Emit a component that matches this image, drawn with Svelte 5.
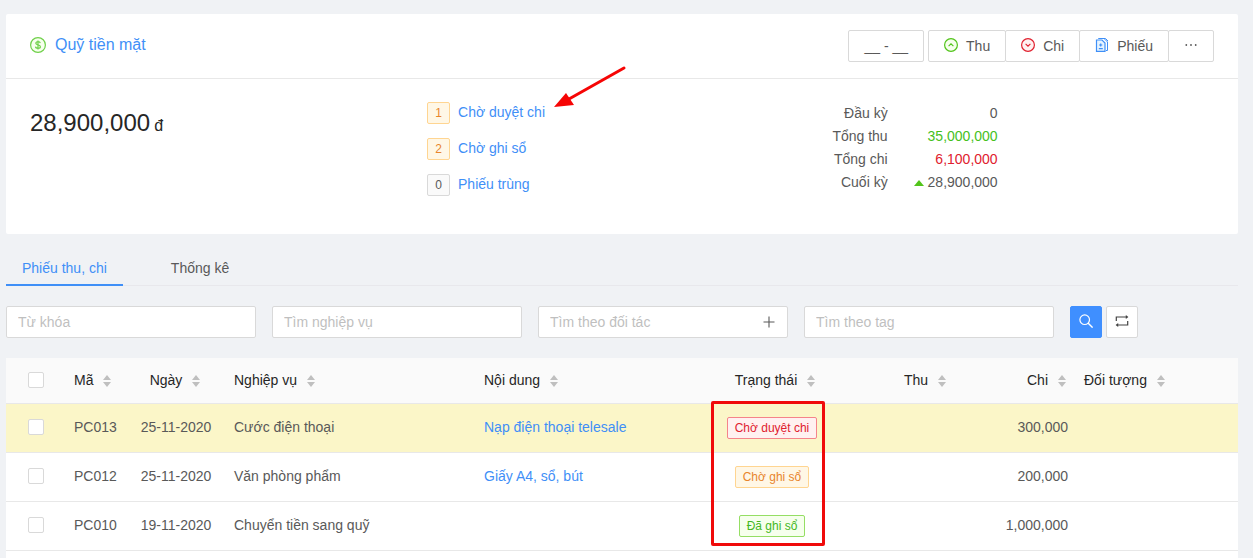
<script lang="ts">
    interface Column {
        title: string;
        align: "left" | "center" | "right";
    }

    interface Voucher {
        code: string;
        date: string;
        type: string;
        content: string;
        status: string;
        tone: string;
        income: string;
        expense: string;
        partner: string;
        marked?: boolean;
    }

    const pending = [
        { count: 1, label: "Chờ duyệt chi", tone: "orange" },
        { count: 2, label: "Chờ ghi sổ", tone: "orange" },
        { count: 0, label: "Phiếu trùng", tone: "plain" },
    ];

    const totals = [
        { label: "Đầu kỳ", value: "0", tone: "" },
        { label: "Tổng thu", value: "35,000,000", tone: "income" },
        { label: "Tổng chi", value: "6,100,000", tone: "expense" },
        { label: "Cuối kỳ", value: "28,900,000", tone: "", up: true },
    ];

    const columns: Column[] = [
        { title: "Mã", align: "left" },
        { title: "Ngày", align: "center" },
        { title: "Nghiệp vụ", align: "left" },
        { title: "Nội dung", align: "left" },
        { title: "Trạng thái", align: "center" },
        { title: "Thu", align: "right" },
        { title: "Chi", align: "right" },
        { title: "Đối tượng", align: "left" },
    ];

    const vouchers: Voucher[] = [
        { code: "PC013", date: "25-11-2020", type: "Cước điện thoại", content: "Nạp điện thoại telesale", status: "Chờ duyệt chi", tone: "red", income: "", expense: "300,000", partner: "", marked: true },
        { code: "PC012", date: "25-11-2020", type: "Văn phòng phẩm", content: "Giấy A4, sổ, bút", status: "Chờ ghi sổ", tone: "orange", income: "", expense: "200,000", partner: "" },
        { code: "PC010", date: "19-11-2020", type: "Chuyển tiền sang quỹ", content: "", status: "Đã ghi sổ", tone: "green", income: "", expense: "1,000,000", partner: "" },
    ];

    let activeTab = $state(0);
    let selected: string[] = $state([]);
    let allSelected = $derived(selected.length === vouchers.length);

    function toggleAll() {
        selected = allSelected ? [] : vouchers.map((v) => v.code);
    }
</script>

<main>
    <section class="card">
        <header class="card-head">
            <a class="title" href="#fund">
                <svg class="title-icon" viewBox="0 0 16 16" aria-hidden="true">
                    <circle cx="8" cy="8" r="7.4" fill="#f6ffed" stroke="#6fd04a" stroke-width="1.2" />
                    <path d="M10.3 6.2c-.2-1-1-1.5-2.3-1.5s-2.2.6-2.2 1.6c0 2.3 4.6 1 4.6 3.4 0 1-1 1.6-2.4 1.6s-2.4-.6-2.5-1.7M8 3.4v9.2" fill="none" stroke="#6fd04a" stroke-width="1.2" />
                </svg>
                <span>Quỹ tiền mặt</span>
            </a>
            <div class="actions">
                <button class="btn range">__ - __</button>
                <div class="btn-group">
                    <button class="btn">
                        <svg viewBox="0 0 14 14" aria-hidden="true">
                            <circle cx="7" cy="7" r="6.4" fill="#f6ffed" stroke="#52c41a" stroke-width="1.2" />
                            <path d="M4.6 8.2 7 5.8l2.4 2.4" fill="none" stroke="#52c41a" stroke-width="1.1" />
                        </svg>
                        Thu
                    </button>
                    <button class="btn">
                        <svg viewBox="0 0 14 14" aria-hidden="true">
                            <circle cx="7" cy="7" r="6.4" fill="#fff1f0" stroke="#e0202e" stroke-width="1.2" />
                            <path d="M4.6 5.8 7 8.2l2.4-2.4" fill="none" stroke="#e0202e" stroke-width="1.1" />
                        </svg>
                        Chi
                    </button>
                    <button class="btn">
                        <svg viewBox="0 0 14 14" aria-hidden="true">
                            <path d="M3.5 1V.5H9L12.5 4v8.5H11M5 .5h5.5L13 3" fill="none" stroke="#3f8ff7" />
                            <path d="M1.5 2h5.5L10 5v8.4H1.5z" fill="#e6f4ff" stroke="#3f8ff7" stroke-width="1.2" />
                            <path d="M5.7 5.4v3.2M4.1 7h3.2M3.8 10.7h4" fill="none" stroke="#3f8ff7" stroke-width="1.2" />
                        </svg>
                        Phiếu
                    </button>
                    <button class="btn more" aria-label="Thêm">
                        <svg viewBox="0 0 14 14" aria-hidden="true">
                            <g fill="#595959"><circle cx="2.3" cy="7" r=".9" /><circle cx="7" cy="7" r=".9" /><circle cx="11.7" cy="7" r=".9" /></g>
                        </svg>
                    </button>
                </div>
            </div>
        </header>

        <div class="summary">
            <div class="balance"><span>28,900,000</span><small>đ</small></div>
            <ul class="pending">
                {#each pending as item, i}
                    <li>
                        <span class="tag {item.tone}">{item.count}</span>
                        <a href="#pending-{i}">{item.label}</a>
                        {#if i === 0}
                            <svg class="arrow" viewBox="0 0 74 44" aria-hidden="true">
                                <path d="M70 3 15 34" stroke="#f60505" stroke-width="3" stroke-linecap="round" />
                                <path d="M0 42 12 28l8 12z" fill="#f60505" />
                            </svg>
                        {/if}
                    </li>
                {/each}
            </ul>
            <dl class="totals">
                {#each totals as row}
                    <dt>{row.label}</dt>
                    <dd class={row.tone}>
                        {#if row.up}<span class="caret-up"></span>{/if}{row.value}
                    </dd>
                {/each}
            </dl>
        </div>
    </section>

    <div class="tabs" role="tablist">
        {#each ["Phiếu thu, chi", "Thống kê"] as tab, i}
            <button role="tab" class="tab" class:active={activeTab === i} aria-selected={activeTab === i} onclick={() => (activeTab = i)}>{tab}</button>
        {/each}
    </div>

    <form class="filters" onsubmit={(e) => e.preventDefault()}>
        <input type="text" placeholder="Từ khóa" aria-label="Từ khóa" />
        <input type="text" placeholder="Tìm nghiệp vụ" aria-label="Tìm nghiệp vụ" />
        <div class="with-add">
            <input type="text" placeholder="Tìm theo đối tác" aria-label="Tìm theo đối tác" />
            <button type="button" class="add" aria-label="Thêm đối tác">
                <svg viewBox="0 0 14 14" aria-hidden="true"><path d="M7 1.5v11M1.5 7h11" stroke="#595959" stroke-width="1.1" /></svg>
            </button>
        </div>
        <input type="text" placeholder="Tìm theo tag" aria-label="Tìm theo tag" />
        <div class="filter-buttons">
            <button type="submit" class="square primary" aria-label="Tìm kiếm">
                <svg viewBox="0 0 14 14" aria-hidden="true">
                    <circle cx="5.7" cy="5.7" r="4.8" fill="none" stroke="#fff" stroke-width="1.2" />
                    <path d="m9 9 4.6 4.6" stroke="#fff" stroke-width="1.4" />
                </svg>
            </button>
            <button type="reset" class="square" aria-label="Đặt lại">
                <svg viewBox="0 0 14 14" aria-hidden="true">
                    <path d="M1.3 7V3h10M12.7 7v4h-10" fill="none" stroke="#434343" stroke-width="1.2" />
                    <path d="m10.8 1 2.6 2-2.6 2zM3.2 9 .6 11l2.6 2z" fill="#434343" />
                </svg>
            </button>
        </div>
    </form>

    <table>
        <colgroup>
            <col class="w-check" />
            <col class="w-code" />
            <col class="w-date" />
            <col class="w-type" />
            <col class="w-content" />
            <col class="w-money" />
            <col class="w-money" />
            <col class="w-money" />
            <col />
        </colgroup>
        <thead>
            <tr>
                <th class="center"><input type="checkbox" aria-label="Chọn tất cả" checked={allSelected} onchange={toggleAll} /></th>
                {#each columns as column}
                    <th class={column.align}>
                        <button class="sort">
                            {column.title}
                            <svg viewBox="0 0 8 12" aria-hidden="true"><path d="M4 0l4 5H0zM4 12l4-5H0z" fill="#bfbfbf" /></svg>
                        </button>
                    </th>
                {/each}
            </tr>
        </thead>
        <tbody>
            {#each vouchers as v, i}
                <tr class:marked={v.marked}>
                    <td class="center"><input type="checkbox" aria-label={v.code} value={v.code} bind:group={selected} /></td>
                    <td>{v.code}</td>
                    <td class="center">{v.date}</td>
                    <td>{v.type}</td>
                    <td>{#if v.content}<a href="#{v.code}">{v.content}</a>{/if}</td>
                    <td class="center status">
                        <span class="tag {v.tone}">{v.status}</span>
                        {#if i === 0}<span class="frame"></span>{/if}
                    </td>
                    <td class="right">{v.income}</td>
                    <td class="right">{v.expense}</td>
                    <td>{v.partner}</td>
                </tr>
            {/each}
            <tr class="next"><td colspan="9"></td></tr>
        </tbody>
    </table>
</main>

<style>
    :global(body) {
        background: #f0f2f5;
    }

    main {
        padding: 14px 15px 0 6px;
        color: #595959;
        font: 14px/22px "Liberation Sans", Arial, sans-serif;
    }

    main :global(*) {
        box-sizing: border-box;
    }

    svg {
        display: block;
        flex: none;
        width: 14px;
        height: 14px;
    }

    a {
        color: #3f8ff7;
        text-decoration: none;
    }

    button,
    input {
        margin: 0;
        color: inherit;
        font: inherit;
    }

    button {
        cursor: pointer;
    }

    .card {
        background: #fff;
        border-radius: 2px;
    }

    .card-head {
        display: flex;
        align-items: center;
        justify-content: space-between;
        height: 65px;
        padding: 0 24px;
        border-bottom: 1px solid #e8e8e8;
    }

    .title {
        display: flex;
        align-items: center;
        gap: 9px;
        padding-bottom: 2px;
        font-size: 16px;
    }

    .title-icon {
        width: 16px;
        height: 16px;
    }

    .actions {
        display: flex;
        gap: 4px;
    }

    .btn-group {
        display: flex;
    }

    .btn {
        display: flex;
        align-items: center;
        gap: 8px;
        height: 32px;
        padding: 0 15px;
        border: 1px solid #d9d9d9;
        border-radius: 2px;
        background: #fff;
    }

    .btn svg {
        margin-bottom: 2px;
    }

    .btn-group .btn + .btn {
        margin-left: -1px;
    }

    .summary {
        display: grid;
        grid-template-columns: repeat(3, 1fr);
        gap: 8px;
        padding: 22px 24px 37px;
    }

    .balance {
        display: flex;
        align-items: baseline;
        gap: 4px;
        padding-top: 4px;
        color: #262626;
        font-size: 24px;
        line-height: 36px;
    }

    .balance small {
        font-size: 16px;
        line-height: 22px;
    }

    .pending {
        display: grid;
        align-content: start;
        gap: 12px;
        margin: 0;
        padding: 0;
        list-style: none;
    }

    .pending li {
        display: flex;
        align-items: center;
        gap: 8px;
        position: relative;
        height: 24px;
    }

    .pending a {
        padding-bottom: 2px;
    }

    .arrow {
        position: absolute;
        left: 127px;
        top: -36px;
        width: 74px;
        height: 44px;
    }

    .tag {
        display: inline-block;
        height: 22px;
        padding: 0 7px;
        border: 1px solid #d9d9d9;
        border-radius: 2px;
        background: #fafafa;
        font-size: 12px;
        line-height: 20px;
    }

    .tag.orange {
        border-color: #ffd591;
        background: #fff7e6;
        color: #e8852c;
    }

    .tag.red {
        border-color: #f5848a;
        background: #fff1f0;
        color: #e0202e;
    }

    .tag.green {
        border-color: #95de64;
        background: #f6ffed;
        color: #45b81f;
    }

    .totals {
        display: grid;
        grid-template-columns: 63px 110px;
        align-content: start;
        margin: 0;
        padding-top: 1px;
        line-height: 23px;
        text-align: right;
    }

    .totals dd {
        margin: 0;
    }

    .income {
        color: #45c11c;
    }

    .expense {
        color: #e0202e;
    }

    .caret-up {
        display: inline-block;
        margin-right: 4px;
        border: 5px solid transparent;
        border-top: 0;
        border-bottom: 6px solid #52c41a;
        vertical-align: 1px;
    }

    .tabs {
        display: flex;
        gap: 32px;
        margin-top: 12px;
        box-shadow: inset 0 -1px #e8e8ec;
    }

    .tab {
        padding: 11px 16px 5px;
        border: 0;
        border-bottom: 2px solid transparent;
        background: none;
    }

    .tab.active {
        border-color: #3f8ff7;
        color: #3f8ff7;
    }

    .filters {
        display: flex;
        gap: 16px;
        margin: 20px 0;
    }

    input[type="text"] {
        width: 250px;
        height: 32px;
        padding: 0 11px;
        border: 1px solid #d9d9d9;
        border-radius: 2px;
        background: #fff;
    }

    input::placeholder {
        color: #bfbfbf;
    }

    .with-add {
        position: relative;
    }

    .add {
        position: absolute;
        top: 8px;
        right: 11px;
        padding: 1px;
        border: 0;
        background: none;
    }

    .filter-buttons {
        display: flex;
        gap: 4px;
    }

    .square {
        display: grid;
        place-content: center;
        width: 32px;
        height: 32px;
        padding: 0 0 2px;
        border: 1px solid #d9d9d9;
        border-radius: 2px;
        background: #fff;
    }

    .square.primary {
        border-color: #3f8fff;
        background: #3f8fff;
    }

    table {
        width: 100%;
        border-collapse: separate;
        border-spacing: 0;
        table-layout: fixed;
        background: #fff;
    }

    .w-check,
    .w-code {
        width: 60px;
    }

    .w-date {
        width: 100px;
    }

    .w-type {
        width: 250px;
    }

    .w-content {
        width: 240px;
    }

    .w-money {
        width: 120px;
    }

    th,
    td {
        height: 49px;
        padding: 0 8px 2px;
        border-bottom: 1px solid #e8e8e8;
        text-align: left;
        white-space: nowrap;
    }

    th {
        height: 46px;
        background: #fafafa;
        color: #262626;
        font-weight: 400;
    }

    .center {
        text-align: center;
    }

    .right {
        text-align: right;
    }

    .sort {
        display: inline-flex;
        align-items: center;
        gap: 10px;
        padding: 0 2px 0 0;
        border: 0;
        background: none;
    }

    .sort svg {
        width: 8px;
        height: 12px;
        margin-top: 2px;
    }

    input[type="checkbox"] {
        display: block;
        width: 16px;
        height: 16px;
        margin: 0 auto;
        border: 1px solid #d9d9d9;
        border-radius: 2px;
        background: #fff;
        appearance: none;
    }

    input[type="checkbox"]:checked {
        border-color: #3f8ff7;
        background: #3f8ff7;
    }

    .marked td {
        background: #fbf6c8;
    }

    .status {
        position: relative;
    }

    .status .tag {
        margin-right: 8px;
        vertical-align: middle;
    }

    .frame {
        position: absolute;
        z-index: 1;
        top: -3px;
        left: -5px;
        width: 114px;
        height: 145px;
        border: 3px solid #f00a0a;
        border-radius: 2px;
        pointer-events: none;
    }

    .next td {
        height: 7px;
        padding: 0;
        border-bottom: 0;
    }
</style>
